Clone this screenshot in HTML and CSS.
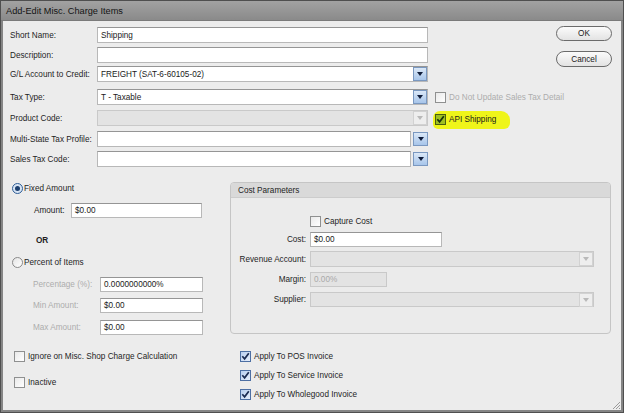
FILE: index.html
```html
<!DOCTYPE html>
<html>
<head>
<meta charset="utf-8">
<link rel="stylesheet" href="styles.css">
</head>
<body>
<div class="window">
  <div class="titlebar">Add-Edit Misc. Charge Items</div>
  <div class="body">
    <div class="top">
      <div class="form">
        <div class="row">
          <span class="lbl">Short Name:</span>
          <div class="field"><div class="input">Shipping</div></div>
        </div>
        <div class="row">
          <span class="lbl">Description:</span>
          <div class="field"><div class="input"></div></div>
        </div>
        <div class="row tight">
          <span class="lbl">G/L Account to Credit:</span>
          <div class="field"><div class="input"><span class="val">FREIGHT (SAT-6-60105-02)</span><span class="dd"></span></div></div>
        </div>
        <div class="row mt7">
          <span class="lbl">Tax Type:</span>
          <div class="field"><div class="input"><span class="val">T - Taxable</span><span class="dd"></span></div></div>
          <div class="extra"><span class="cb"></span><span class="dis">Do Not Update Sales Tax Detail</span></div>
        </div>
        <div class="row mt5">
          <span class="lbl">Product Code:</span>
          <div class="field"><div class="input disabled"><span class="val"></span><span class="dd off"></span></div></div>
          <div class="highlight">
            <span class="cb api"><svg width="11" height="11" viewBox="0 0 11 11"><path d="M2.3 5.2 L4.6 7.8 L8.8 2.2" fill="none" stroke="#17300a" stroke-width="1.7"/></svg></span>
            <span>API Shipping</span>
          </div>
        </div>
        <div class="row mt5">
          <span class="lbl">Multi-State Tax Profile:</span>
          <div class="field"><div class="input"></div><span class="dd outside"></span></div>
        </div>
        <div class="row">
          <span class="lbl">Sales Tax Code:</span>
          <div class="field"><div class="input"></div><span class="dd outside"></span></div>
        </div>
      </div>
      <div class="btns">
        <div class="btn">OK</div>
        <div class="btn">Cancel</div>
      </div>
    </div>

    <div class="middle">
      <div class="leftcol">
        <div class="radiorow r1"><span class="radio on"><span class="dot"></span></span><span>Fixed Amount</span></div>
        <div class="frow amount"><span class="flbl w37">Amount:</span><div class="input w131">$0.00</div></div>
        <div class="or">OR</div>
        <div class="radiorow r2"><span class="radio"></span><span>Percent of Items</span></div>
        <div class="frow pct"><span class="flbl w67 dis">Percentage (%):</span><div class="input w103">0.0000000000%</div></div>
        <div class="frow pct m6"><span class="flbl w67 dis">Min Amount:</span><div class="input w103">$0.00</div></div>
        <div class="frow pct m7"><span class="flbl w67 dis">Max Amount:</span><div class="input w103">$0.00</div></div>
      </div>
      <div class="group">
        <div class="ghead">Cost Parameters</div>
        <div class="gbody">
          <div class="grow capture"><span class="glbl"></span><span class="cb"></span><span class="cbl">Capture Cost</span></div>
          <div class="grow g5"><span class="glbl">Cost:</span><div class="input w132">$0.00</div></div>
          <div class="grow g4 h16"><span class="glbl">Revenue Account:</span><div class="input disabled w284"><span class="val"></span><span class="dd off"></span></div></div>
          <div class="grow g5"><span class="glbl">Margin:</span><div class="input disabled w77 graytext">0.00%</div></div>
          <div class="grow g5"><span class="glbl">Supplier:</span><div class="input disabled w284"><span class="val"></span><span class="dd off"></span></div></div>
        </div>
      </div>
    </div>

    <div class="bottom">
      <div class="bleft">
        <div class="cbrow"><span class="cb"></span><span class="cbl">Ignore on Misc. Shop Charge Calculation</span></div>
        <div class="cbrow m15"><span class="cb"></span><span class="cbl">Inactive</span></div>
      </div>
      <div class="bright">
        <div class="cbrow"><span class="cb on"><svg width="11" height="11" viewBox="0 0 11 11"><path d="M2.3 5.2 L4.6 7.8 L8.8 2.2" fill="none" stroke="#1b2c52" stroke-width="1.7"/></svg></span><span class="cbl">Apply To POS Invoice</span></div>
        <div class="cbrow m8"><span class="cb on"><svg width="11" height="11" viewBox="0 0 11 11"><path d="M2.3 5.2 L4.6 7.8 L8.8 2.2" fill="none" stroke="#1b2c52" stroke-width="1.7"/></svg></span><span class="cbl">Apply To Service Invoice</span></div>
        <div class="cbrow m8"><span class="cb on"><svg width="11" height="11" viewBox="0 0 11 11"><path d="M2.3 5.2 L4.6 7.8 L8.8 2.2" fill="none" stroke="#1b2c52" stroke-width="1.7"/></svg></span><span class="cbl">Apply To Wholegood Invoice</span></div>
      </div>
    </div>

    <svg class="grip" width="9" height="9" viewBox="0 0 9 9">
      <path d="M8 1 L1 8 M8 4 L4 8 M8 7 L7 8" stroke="#9a9a9a" stroke-width="1"/>
    </svg>
  </div>
</div>
</body>
</html>
```

FILE: styles.css
```css
* { box-sizing: border-box; }
html, body { margin: 0; padding: 0; }
body {
  width: 624px;
  height: 413px;
  overflow: hidden;
  background: #ffffff;
  font-family: "Liberation Sans", Arial, sans-serif;
  font-size: 8.2px;
  color: #1e1e1e;
}
.window {
  width: 624px;
  height: 413px;
  display: flex;
  flex-direction: column;
  background: #858585;
  border: 1px solid #4f4f4f;
  padding: 0 2px 2px 2px;
}
.titlebar {
  height: 20px;
  flex: none;
  margin: 0 -2px;
  padding-left: 5px;
  display: flex;
  align-items: center;
  background: linear-gradient(#a2a2a2, #8a8a8a);
  border-bottom: 1px solid #7a7a7a;
  color: #141414;
  font-size: 9.2px;
}
.body {
  flex: 1;
  position: relative;
  background: #ececec;
  padding: 6px 9px 0 7px;
  display: flex;
  flex-direction: column;
}
.top { display: flex; justify-content: space-between; }
.form { width: 545px; flex: none; min-width: 0; display: flex; flex-direction: column; gap: 4px; }
.row { display: flex; align-items: center; height: 16px; }
.tight { margin-top: -1px; }
.mt7 { margin-top: 3px; }
.mt5 { margin-top: 1px; }
.lbl { width: 87px; flex: none; white-space: nowrap; }
.field { width: 331px; height: 16px; flex: none; display: flex; align-items: center; gap: 2px; }
.input {
  height: 16px;
  flex: 1;
  background: #ffffff;
  border: 1px solid #b8b8b8;
  border-top-color: #959595;
  padding: 0 0 0 3px;
  display: flex;
  align-items: center;
  white-space: nowrap;
  color: #1a1a1a;
}
.input.disabled { background: #e3e3e3; border-color: #c9c9c9; }
.val { flex: 1; }
.dd {
  width: 14px;
  height: 14px;
  flex: none;
  background: linear-gradient(#dbe8f7, #a7c5ea);
  border: 1px solid #7a98c0;
  display: flex;
  align-items: center;
  justify-content: center;
}
.dd::after {
  content: "";
  width: 0;
  height: 0;
  border-left: 3px solid transparent;
  border-right: 3px solid transparent;
  border-top: 4px solid #0f1c3a;
}
.dd.off { background: #eeeeee; border-color: #d2d2d2; }
.dd.off::after { border-top-color: #b9b9b9; }
.dd.outside { width: 15px; }
.extra { margin-left: 7px; flex: none; white-space: nowrap; display: flex; align-items: center; gap: 3px; }
.dis { color: #adadad; }
.highlight {
  margin-left: 5px;
  flex: none;
  white-space: nowrap;
  height: 18px;
  margin-top: 3px;
  padding: 0 14px 0 2px;
  background: #eff51a;
  border-radius: 7px 9px 6px 5px;
  display: flex;
  align-items: center;
  gap: 3px;
  color: #1a1a1a;
}
.cb {
  width: 11px;
  height: 11px;
  flex: none;
  border: 1px solid #8f9090;
  background: linear-gradient(135deg, #e9e9e9, #ffffff);
  display: inline-flex;
}
.cb svg { display: block; margin: -1px; }
.cb.on { border-color: #4d6fa3; background: linear-gradient(135deg, #b8cff0, #e6eefb); }
.cb.api { border-color: #4a5d10; background: #9fbf21; }
.btns { display: flex; flex-direction: column; gap: 10px; width: 56px; margin-top: -1px; flex: none; }
.btn {
  height: 15px;
  border: 1px solid #6b6b6b;
  border-radius: 8px;
  background: linear-gradient(#fbfbfb, #e3e3e3);
  display: flex;
  align-items: center;
  justify-content: center;
  color: #1a1a1a;
}
.btn + .btn { height: 16px; }

.middle { display: flex; align-items: flex-start; margin-top: 15px; }
.leftcol { width: 220px; flex: none; display: flex; flex-direction: column; }
.radiorow { display: flex; align-items: center; height: 11px; padding-left: 2px; gap: 1px; }
.r1 { margin-top: 1px; }
.r2 { margin-top: 12px; }
.radio {
  width: 11px;
  height: 11px;
  border-radius: 50%;
  border: 1px solid #8a8a8a;
  background: linear-gradient(135deg, #e4e4e4, #ffffff);
  display: flex;
  align-items: center;
  justify-content: center;
}
.radio.on { border-color: #2f5e96; background: #d7e4f4; }
.dot { width: 5px; height: 5px; border-radius: 50%; background: #1c3f6e; }
.frow { display: flex; align-items: center; height: 15px; }
.frow .input { flex: none; height: 15px; }
.amount { margin-top: 9px; padding-left: 24px; }
.pct { margin-top: 9px; padding-left: 23px; }
.pct.m6 { margin-top: 6px; }
.pct.m7 { margin-top: 7px; }
.flbl { flex: none; white-space: nowrap; }
.w37 { width: 37px; }
.w67 { width: 67px; }
.w131 { width: 131px; }
.w103 { width: 103px; }
.w132 { width: 132px; }
.w284 { width: 284px; }
.w77 { width: 77px; }
.or { margin-top: 17px; height: 10px; padding-left: 26px; font-weight: bold; display: flex; align-items: center; }

.group {
  width: 381px;
  height: 152px;
  flex: none;
  border: 1px solid #c5c5c5;
  border-radius: 4px;
  overflow: hidden;
  background: #ebebeb;
}
.ghead {
  height: 15px;
  background: #d9d9d9;
  border-bottom: 1px solid #cccccc;
  padding-left: 7px;
  display: flex;
  align-items: center;
}
.gbody { display: flex; flex-direction: column; }
.grow { display: flex; align-items: center; height: 15px; }
.grow .input { flex: none; height: 15px; }
.grow.h16, .grow.h16 .input { height: 16px; }
.capture { margin-top: 18px; height: 11px; gap: 0; }
.capture .cbl { margin-left: 3px; }
.g5 { margin-top: 5px; }
.g4 { margin-top: 4px; }
.glbl { width: 79px; flex: none; text-align: right; padding-right: 4px; white-space: nowrap; }
.graytext { color: #a9a9a9; }

.bottom { display: flex; margin-top: 16px; }
.bleft { width: 230px; flex: none; padding-left: 4px; display: flex; flex-direction: column; }
.bright { display: flex; flex-direction: column; }
.cbrow { display: flex; align-items: center; height: 11px; gap: 3px; white-space: nowrap; }
.m15 { margin-top: 15px; }
.m8 { margin-top: 8px; }
.grip { position: absolute; right: 0; bottom: 0; }
```
